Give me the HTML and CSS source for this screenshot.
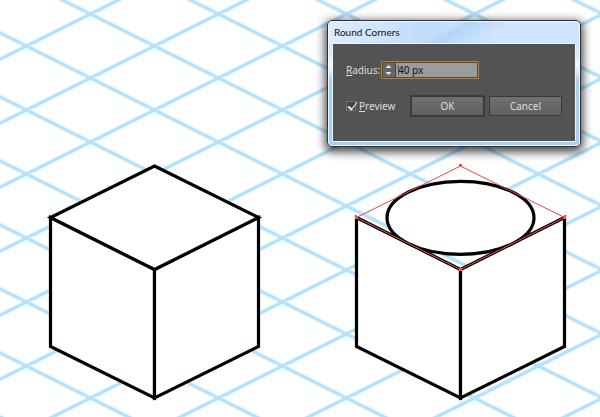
FILE: index.html
```html
<!DOCTYPE html>
<html lang="en">
<head>
<meta charset="utf-8">
<title>Round Corners</title>
<link rel="stylesheet" href="styles.css">
</head>
<body>
<main class="artboard">
  <svg class="canvas" viewBox="0 0 600 417" preserveAspectRatio="xMinYMin slice" aria-label="Isometric cubes on a grid">
    <defs>
      <pattern id="grid" x="26.5" y="46" width="128" height="64" patternUnits="userSpaceOnUse">
        <path class="grid-line" d="M-16 -8L144 72M-16 72L144 -8"/>
      </pattern>
    </defs>
    <rect width="600" height="417" fill="url(#grid)"/>
    <g class="edge">
      <path d="M50.500 217.500L154.500 269.500V398L50.500 346.500Z"/>
      <path d="M258.500 217.500L154.500 269.500V398L258.500 346.500Z"/>
      <path d="M154.500 166L258.500 217.500L154.500 269.500L50.500 217.500Z"/>
    </g>
    <g class="edge">
      <path d="M356.500 217.500L460.500 269.500V398L356.500 346.500Z"/>
      <path d="M564.500 217.500L460.500 269.500V398L564.500 346.500Z"/>
      <ellipse cx="460.500" cy="217.800" rx="73.500" ry="36.500"/>
    </g>
    <path class="selection" d="M460.500 166L564.500 217.500L460.500 269.500L356.500 217.500Z"/>
    <path class="anchor" d="M459 164h3v3h-3zM563 216h3v3h-3zM459 268h3v3h-3zM355 216h3v3h-3z"/>
  </svg>

  <section class="dialog" role="dialog" aria-labelledby="title">
    <h1 class="title" id="title">Round Corners</h1>
    <form class="panel">
      <div class="row">
        <label class="radius-label" for="radius"><u>R</u>adius:</label>
        <div class="field">
          <div class="stepper">
            <button type="button" aria-label="Increase"><svg viewBox="0 0 11 7"><path d="M2.500 5L5.500 2L8.500 5Z"/></svg></button>
            <button type="button" aria-label="Decrease"><svg viewBox="0 0 11 7"><path d="M2.500 2L5.500 5L8.500 2Z"/></svg></button>
          </div>
          <span class="caret"></span>
          <input class="radius" id="radius" type="text" value="40 px">
        </div>
      </div>
      <div class="row">
        <label class="preview"><input type="checkbox" checked><span><u>P</u>review</span></label>
        <button class="button ok" type="button">OK</button>
        <button class="button" type="button">Cancel</button>
      </div>
    </form>
  </section>
</main>
</body>
</html>
```

FILE: styles.css
```css
* { box-sizing: border-box; }

body {
  margin: 0;
  background: #fff;
  font: 10px/14px "Noto Sans", sans-serif;
  overflow: hidden;
}

.artboard {
  position: relative;
  min-height: 100vh;
}

.canvas {
  display: block;
  width: 100%;
}

.grid-line {
  fill: none;
  stroke: #b5e3fb;
  stroke-width: 3.6;
}

.edge {
  fill: #fff;
  stroke: #000;
  stroke-width: 3.2;
  stroke-linejoin: miter;
}

.selection {
  fill: none;
  stroke: #f04545;
  stroke-width: 1;
}

.anchor { fill: #ff4b4b; }

.dialog {
  position: absolute;
  top: 20px;
  right: 19px;
  width: 254px;
  padding: 0 4px 4px;
  border: 1px solid #26323d;
  border-radius: 5px;
  background:
    linear-gradient(150deg, transparent 46%, #b4d4f7 50%, #c6e0fb 60%, transparent 64%) 0 0 / 100% 22px no-repeat,
    linear-gradient(90deg, #deedfc, #bfdcfa 40%, #d0e6ff 70%, #cfe5ff) 0 0 / 100% 22px no-repeat,
    linear-gradient(#d4e8fd 25%, #f0f8ff 36%, #a8cff2 48%, #abcff3);
  box-shadow: inset 0 0 0 1px #f0f8ff, 0 3px 10px 2px #000000b8;
}

.title {
  margin: 0;
  padding: 4px 2px;
  color: #111;
  font: 10px/14px Lato, sans-serif;
}

.panel {
  display: flex;
  flex-direction: column;
  gap: 17px;
  padding: 17px 12px 25px;
  border: 1px solid #eaf5ff;
  background: #535353;
  color: #ddd;
}

.row {
  display: flex;
  align-items: center;
}

.radius-label {
  width: 36px;
  padding-left: 1px;
}

.field {
  position: relative;
  display: flex;
  width: 98px;
  height: 18px;
  padding: 1px;
  border: 1px solid #c67c20;
  border-radius: 1px;
  background: #4b4b4b;
}

.stepper {
  display: flex;
  flex-direction: column;
  width: 12px;
  background: #666;
}

.stepper button {
  flex: 1;
  display: flex;
  padding: 0;
  border: 0;
  background: none;
}

.stepper svg {
  width: 11px;
  height: 7px;
  fill: #eee;
}

.caret {
  position: absolute;
  top: 3px;
  left: 16px;
  width: 1px;
  height: 10px;
  background: #555;
}

.radius {
  flex: 1;
  min-width: 0;
  padding: 0 2px;
  border: 0;
  border-left: 1px solid #444;
  outline: 0;
  background: #9c9c9c;
  color: #111;
  font: inherit;
}

.preview {
  display: flex;
  align-items: center;
  gap: 3px;
  width: 66px;
}

.preview input {
  appearance: none;
  width: 10px;
  height: 10px;
  margin: 0 0 0 1px;
  border: 1px solid #777;
  background: #444;
}

.preview input:checked::after {
  content: "";
  display: block;
  width: 4px;
  height: 8px;
  margin: -2px 0 0 3px;
  border: solid #eee;
  border-width: 0 1px 2px 0;
  transform: rotate(38deg);
}

.button {
  width: 73px;
  height: 20px;
  padding: 0;
  border: 1px solid #383838;
  background: linear-gradient(#707070, #606060);
  color: #ddd;
  font: inherit;
}

.ok {
  margin-right: 5px;
  outline: 1px solid #3e3e3e;
}
```
